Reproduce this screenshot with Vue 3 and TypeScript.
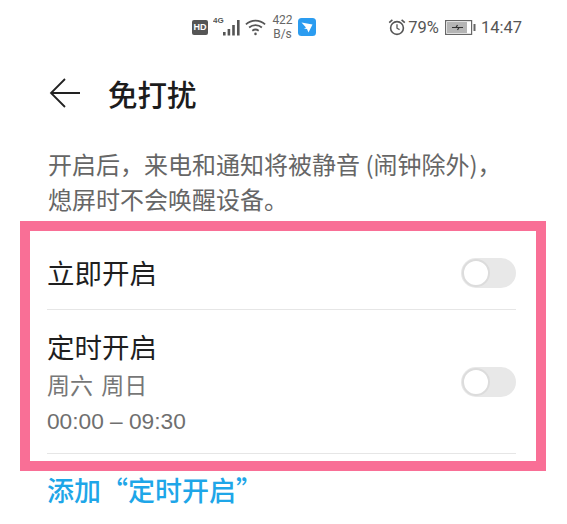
<script setup lang="ts">
interface Row { title: string; lines: string[] }
const rows: Row[] = [
  { title: '立即开启', lines: [] },
  { title: '定时开启', lines: ['周六 周日', '00:00 – 09:30'] },
]
</script>

<template>
  <div class="page" lang="zh-CN">
    <div class="status">
      <div class="status-left">
        <span class="hd">HD</span>
        <svg class="signal" width="30" height="24" viewBox="0 0 30 24">
          <text x="0" y="8" class="net">4G</text>
          <rect x="10" y="17" width="2.6" height="3.5" fill="#555" />
          <rect x="14.6" y="14" width="2.6" height="6.5" fill="#555" />
          <rect x="19.2" y="10" width="2.6" height="10.5" fill="#555" />
          <rect x="24" y="5" width="2.6" height="15.5" fill="#555" />
        </svg>
        <svg class="wifi" width="21" height="19" viewBox="0 0 23 20" fill="none" stroke="#555" stroke-width="1.9">
          <path d="M1 6.5 C7 1 16 1 22 6.5" />
          <path d="M4.5 10 C8.5 6.5 14.5 6.5 18.5 10" />
          <path d="M8 13.5 C10 12 13 12 15 13.5" />
          <circle cx="11.5" cy="17" r="1.4" fill="#555" stroke="none" />
        </svg>
        <div class="speed"><span>422</span><span>B/s</span></div>
        <svg class="app" width="18" height="18" viewBox="0 0 18 18">
          <rect width="18" height="18" rx="3.5" fill="#2b9cf0" />
          <path d="M3.5 4.5 L14.5 6.5 L10.5 14.5 L9 11 L6 10.5 L8 9.5 Z" fill="#fff" />
        </svg>
      </div>
      <div class="status-right">
        <svg class="alarm" width="18" height="18" viewBox="0 0 18 18" fill="none" stroke="#555" stroke-width="1.6">
          <circle cx="9" cy="10" r="6.4" />
          <path d="M9 6.2 V10.2 L11.6 11.6" stroke-width="1.3" />
          <path d="M1.2 4.6 L4.4 1.8 M16.8 4.6 L13.6 1.8" />
        </svg>
        <span class="pct">79%</span>
        <svg class="battery" width="31" height="15" viewBox="0 0 31 15">
          <rect x="0.6" y="0.6" width="26" height="13.8" fill="#fff" stroke="#666" stroke-width="1.2" />
          <rect x="2" y="2" width="20" height="11" fill="#b5b5b5" />
          <path d="M7 7.5 H18 M12.5 5 L11 7.5 H14 L12.5 10" stroke="#333" stroke-width="1.2" fill="none" />
          <rect x="28.5" y="4" width="2" height="7" fill="#666" />
        </svg>
        <span class="time">14:47</span>
      </div>
    </div>

    <header class="head">
      <svg width="32" height="30" viewBox="0 0 32 30" fill="none" stroke="#222" stroke-width="1.8">
        <path d="M16 1 L2 15 L16 29 M2 15 H31" />
      </svg>
      <h1>免打扰</h1>
    </header>

    <p class="desc">开启后，来电和通知将被静音 (闹钟除外)，<br />熄屏时不会唤醒设备。</p>

    <section class="frame">
      <div v-for="row in rows" :key="row.title" class="row" :class="{ tall: row.lines.length }">
        <div class="copy">
          <div class="title">{{ row.title }}</div>
          <div v-for="line in row.lines" :key="line" class="sub">{{ line }}</div>
        </div>
        <span class="toggle"><span class="thumb"></span></span>
      </div>
    </section>

    <div class="add">添加“定时开启”</div>
  </div>
</template>

<style>
html, body { margin: 0; background: #fff; }
</style>

<style scoped>
.page {
  width: 567px;
  height: 524px;
  overflow: hidden;
  background: #fff;
  font-family: "Noto Sans CJK SC", "Liberation Sans", sans-serif;
}
.status {
  height: 56px;
  display: flex;
  justify-content: space-between;
  align-items: center;
  padding: 0 45px 2px 192px;
  box-sizing: border-box;
  color: #555;
}
.status-left, .status-right { display: flex; align-items: center; }
.hd {
  width: 16px;
  height: 15px;
  border-radius: 2px;
  background: #555;
  color: #fff;
  font: 700 9px/15px "Liberation Sans", sans-serif;
  text-align: center;
}
.signal { margin-left: 5px; }
.net { font: 700 8px "Liberation Sans", sans-serif; fill: #555; }
.wifi { margin-left: 2px; }
.speed {
  display: flex;
  flex-direction: column;
  margin-left: 5px;
  font: 12px/14px Roboto, sans-serif;
  color: #666;
  width: 23px;
  text-align: center;
}
.app { margin-left: 4px; }
.alarm { margin-right: 2px; }
.pct { font: 16.5px Roboto, sans-serif; }
.battery { margin-left: 6px; }
.time { margin-left: 5px; font: 16.5px Roboto, sans-serif; }
.head {
  display: flex;
  align-items: center;
  height: 30px;
  padding: 22px 0 0 49px;
}
.head h1 {
  margin: -1px 0 0 27px;
  font-size: 29.5px;
  font-weight: 500;
  line-height: 30px;
  color: #1c1c1c;
}
.desc {
  margin: 38px 0 0 48px;
  font-size: 24px;
  line-height: 35px;
  color: #666;
  white-space: nowrap;
}
.frame {
  box-sizing: border-box;
  width: 526px;
  height: 250px;
  margin: 5px 0 0 20px;
  border: 10px solid #f96f96;
  padding: 0 20px 0 17px;
  display: flex;
  flex-direction: column;
}
.row {
  box-sizing: border-box;
  height: 79px;
  padding-top: 6px;
  display: flex;
  align-items: center;
  justify-content: space-between;
  border-bottom: 1px solid #e6e6e6;
}
.row.tall {
  height: 144px;
  padding-top: 1px;
}
.copy { margin-top: -2px; }
.row.tall .copy { margin-top: -1px; }
.title {
  font-size: 27.5px;
  line-height: 34px;
  color: #1f1f1f;
}
.sub {
  font-size: 23px;
  line-height: 42px;
  word-spacing: 3px;
  color: #777;
}
.sub:last-child {
  margin-top: 3px;
  font-family: "Liberation Sans", sans-serif;
  font-size: 22.7px;
  line-height: 26px;
  word-spacing: 0;
  color: #6f6f6f;
}
.toggle {
  width: 55px;
  height: 30px;
  border-radius: 15px;
  background: #e8e8e8;
  position: relative;
  flex: none;
}
.thumb {
  position: absolute;
  left: 1px;
  top: 1px;
  width: 24px;
  height: 24px;
  border-radius: 50%;
  background: #fff;
  border: 2px solid #dcdcdc;
}
.add {
  margin: 2px 0 0 47px;
  font-size: 27px;
  font-weight: 500;
  line-height: 34px;
  color: #1ea6e8;
  white-space: nowrap;
}
</style>
